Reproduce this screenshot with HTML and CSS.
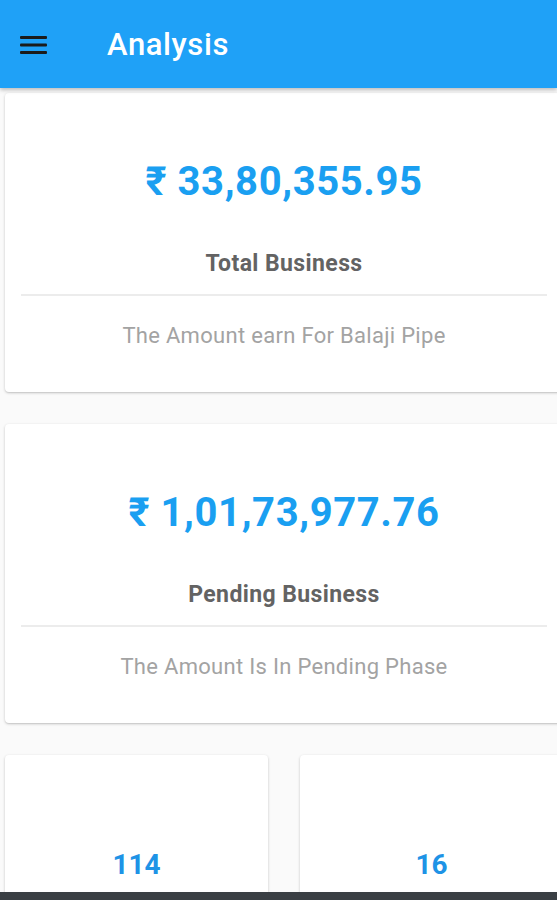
FILE: index.html
```html
<!DOCTYPE html>
<html lang="en">
<head>
    <meta charset="UTF-8">
    <meta name="viewport" content="width=device-width, initial-scale=1.0">
    <title>Analysis</title>
    <link rel="stylesheet" href="styles.css">
</head>
<body>
    <!-- Top bar -->
    <header class="app-bar">
        <span class="menu-btn">
            <svg width="28" height="20" viewBox="0 0 28 20">
                <rect x="0" y="1" width="27" height="3" rx="1" fill="#1b1b1b"/>
                <rect x="0" y="8.5" width="27" height="3" rx="1" fill="#1b1b1b"/>
                <rect x="0" y="16" width="27" height="3" rx="1" fill="#1b1b1b"/>
            </svg>
        </span>
        <h1 class="app-title">Analysis</h1>
    </header>

    <main class="content">
        <!-- Total business -->
        <div class="card">
            <p class="amount">₹ 33,80,355.95</p>
            <h2 class="card-title">Total Business</h2>
            <hr class="divider">
            <p class="card-text">The Amount earn For Balaji Pipe</p>
        </div>

        <!-- Pending business -->
        <div class="card">
            <p class="amount">₹ 1,01,73,977.76</p>
            <h2 class="card-title">Pending Business</h2>
            <hr class="divider">
            <p class="card-text">The Amount Is In Pending Phase</p>
        </div>

        <!-- Counts -->
        <div class="small-row">
            <div class="card small-card">
                <p class="count">114</p>
            </div>
            <div class="card small-card">
                <p class="count">16</p>
            </div>
        </div>
    </main>

    <div class="nav-bar"></div>
</body>
</html>
```

FILE: styles.css
```css
html, body {
    margin: 0;
    padding: 0;
}

body {
    font-family: Roboto, "Noto Sans", Arial, sans-serif;
    background-color: #fafafa;
    width: 557px;
    height: 900px;
    overflow: hidden;
}

.app-bar {
    height: 88px;
    background-color: #1fa1f7;
    display: flex;
    align-items: center;
    box-shadow: 0 2px 4px rgba(0,0,0,0.25);
    position: relative;
    z-index: 2;
}

.menu-btn {
    display: flex;
    margin-left: 20px;
    margin-top: 2px;
}

.app-title {
    margin: 0 0 0 59px;
    color: #ffffff;
    font-size: 31px;
    font-weight: 500;
    letter-spacing: 0.6px;
}

.content {
    width: 558px;
    padding: 5px 0 0 5px;
    display: flex;
    flex-direction: column;
    gap: 32px;
}

.card {
    background-color: #ffffff;
    border-radius: 4px;
    box-shadow: 0 1px 3px rgba(0,0,0,0.2), 0 1px 1px rgba(0,0,0,0.06);
    padding: 66px 16px 42px;
    text-align: center;
}

.amount {
    margin: 0;
    font-size: 40px;
    line-height: 46px;
    font-weight: 700;
    letter-spacing: 0.6px;
    color: #1a9ff1;
}

.card-title {
    margin: 45px 0 0;
    font-size: 23px;
    line-height: 28px;
    font-weight: 700;
    letter-spacing: 0.4px;
    color: #636363;
}

.divider {
    margin: 16px 0 0;
    border: none;
    height: 2px;
    background-color: #ececec;
}

.card-text {
    margin: 26px 0 0;
    font-size: 22px;
    line-height: 28px;
    letter-spacing: 0.3px;
    color: #a3a3a3;
}

.small-row {
    display: flex;
    gap: 32px;
}

.small-card {
    flex: 0 0 263px;
    box-sizing: border-box;
    padding: 94px 0 40px;
}

.count {
    margin: 0;
    font-size: 28px;
    line-height: 32px;
    font-weight: 700;
    color: #1e93e6;
}

.nav-bar {
    position: fixed;
    left: 0;
    right: 0;
    bottom: 0;
    height: 8px;
    background-color: #3a3f44;
    z-index: 3;
}
```
